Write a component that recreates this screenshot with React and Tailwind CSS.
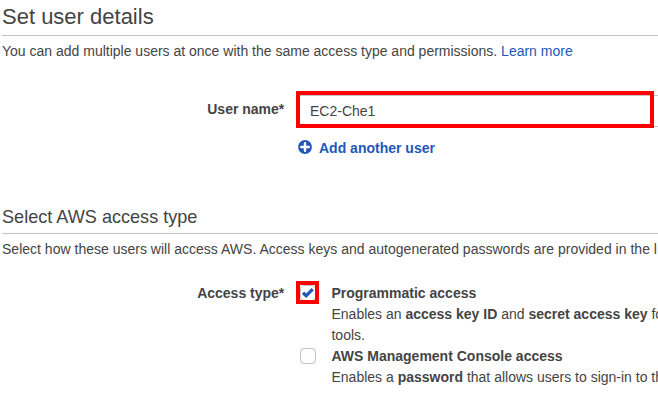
const Add = () => (
  <svg className="-mt-[3px] block h-[14px] w-[14px] shrink-0" viewBox="0 0 14 14">
    <circle cx="7" cy="7" r="6.9" fill="#2257b9" />
    <path d="M7 3.2v7.6M3.2 7h7.6" stroke="#fff" strokeWidth="2.4" strokeLinecap="round" />
  </svg>
);

const Checkbox = ({ checked }) => (
  <span className="flex h-4 w-4 items-center justify-center rounded-[4px] border border-[#c4c4c4] bg-white">
    {checked && (
      <svg className="block h-[14px] w-[14px] shrink-0" viewBox="0 0 14 14">
        <path d="M2 6.8L5.2 9.8L11.7 3.1" fill="none" stroke="#2257b9" strokeWidth="3.3" />
      </svg>
    )}
  </span>
);

const Section = ({ title, titleClass, children, intro, introClass = "" }) => (
  <section>
    <h2 className={titleClass}>{title}</h2>
    <p className={`mt-[5px] whitespace-nowrap ${introClass}`}>{intro}</p>
    {children}
  </section>
);

export default function App() {
  return (
    <main className="h-[412px] w-[658px] overflow-hidden bg-white pl-[2px] font-['Liberation_Sans',Arial,sans-serif] text-[14px] leading-[21px] text-[#444]">
      <Section
        title="Set user details"
        titleClass="h-9 border-b border-[#c4c4c4] pt-[3px] text-[22px] leading-[27px]"
        intro={
          <>
            You can add multiple users at once with the same access type and permissions.{" "}
            <a className="text-[#2257b9]">Learn more</a>
          </>
        }
      >
        <div className="mt-[29px] flex">
          <label className="mt-2 w-[282.3px] shrink-0 text-right font-bold">User name*</label>
          <div className="relative ml-[13.7px] mt-[4px] h-8 w-[400px] shrink-0 rounded-[2px] border border-[#c4c4c4] pl-[11px] leading-[31px]">
            EC2-Che1
            <span className="absolute -left-[3px] -top-[5px] h-[37px] w-[358px] border-4 border-[#f00]" />
          </div>
        </div>
        <a className="ml-[296px] mt-[11px] flex items-center gap-[7px] font-bold text-[#2257b9]">
          <Add />
          Add another user
        </a>
      </Section>
      <div className="h-[43px]" />
      <Section
        title="Select AWS access type"
        titleClass="h-[32px] border-b border-[#c4c4c4] pt-[4px] text-[18.1px] leading-[22px]"
        introClass="tracking-[0.01px]"
        intro="Select how these users will access AWS. Access keys and autogenerated passwords are provided in the l"
      >
        <div className="mt-[23px] flex whitespace-nowrap">
          <div className="w-[282.3px] shrink-0 text-right font-bold">Access type*</div>
          <div className="ml-[11.7px]">
            <div className="flex">
              <span className="-mt-[2px] h-[23px] w-[23px] shrink-0 overflow-hidden border-4 border-[#f00]">
                <Checkbox checked />
              </span>
              <div className="-mb-px ml-[12.5px]">
                <b className="block">Programmatic access</b>
                Enables an <b>access key ID</b> and <b>secret access key</b> fo
                <br />
                tools.
              </div>
            </div>
            <div className="mt-px flex pl-1">
              <span className="mt-[2px] w-4 shrink-0">
                <Checkbox />
              </span>
              <div className="ml-[15.5px]">
                <b className="block">AWS Management Console access</b>
                Enables a <b>password</b> that allows users to sign-in to th
              </div>
            </div>
          </div>
        </div>
      </Section>
    </main>
  );
}
